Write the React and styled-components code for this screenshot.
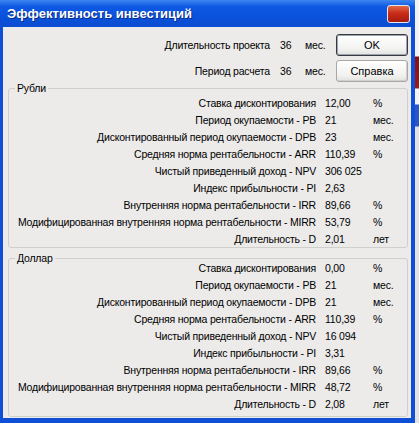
import React from 'react';
import styled, { createGlobalStyle } from 'styled-components';

const GlobalStyle = createGlobalStyle`
  html, body {
    margin: 0;
    padding: 0;
  }
  body {
    font-family: 'Liberation Sans', Arial, sans-serif;
    font-size: 10.5px;
    letter-spacing: -0.2px;
    color: #000;
  }
`;

// desktop behind the dialog, only a thin strip shows on the right
const Desktop = styled.div`
  display: flex;
  width: 419px;
  height: 423px;
  overflow: hidden;
  background: linear-gradient(
    to bottom,
    #f2f2f2 0px,
    #f2f2f2 56px,
    #8a1010 57px,
    #a01818 88px,
    #f4f4f4 89px,
    #f4f4f4 104px,
    #2a56c8 105px,
    #2a56c8 126px,
    #e2e2e2 127px,
    #e2e2e2 100%
  );
`;

const Window = styled.div`
  display: flex;
  flex-direction: column;
  flex-shrink: 0;
  width: 415px;
  height: 423px;
  background: #0f4fd6;
`;

const TitleBar = styled.div`
  display: flex;
  flex-shrink: 0;
  align-items: center;
  justify-content: space-between;
  height: 27px;
  padding: 0 5px 0 7px;
  box-sizing: border-box;
  background: linear-gradient(
    to bottom,
    #3d86f0 0%,
    #0d58e4 25%,
    #0a52dc 60%,
    #0b4cd0 100%
  );
`;

const Title = styled.span`
  color: #fff;
  font-family: 'Liberation Sans', Arial, sans-serif;
  font-weight: bold;
  font-size: 13px;
  letter-spacing: 0;
  text-shadow: 1px 1px 0 #0a2a80;
`;

const CloseBox = styled.div`
  width: 23px;
  height: 18px;
  margin-top: 1px;
  border: 1px solid #e8e8e8;
  border-radius: 3px;
  box-sizing: border-box;
  background: linear-gradient(to bottom, #e06a48 0%, #c82c18 45%, #a81a10 100%);
`;

const Frame = styled.div`
  flex: 1;
  display: flex;
  min-height: 0;
  padding: 0 4px 5px 3px;
  background: #0f4fd6;
`;

const Body = styled.div`
  flex: 1;
  display: flex;
  flex-direction: column;
  min-width: 0;
  padding-top: 7px;
  background: #ecebea;
`;

const Header = styled.div`
  display: grid;
  grid-template-columns: minmax(0, 1fr) 25px 31px 72px;
  grid-auto-rows: 22px;
  row-gap: 4px;
  padding-right: 3px;
  align-items: center;
`;

const HeadLabel = styled.span`
  text-align: right;
  padding-right: 10px;
  white-space: nowrap;
`;

const Button = styled.button`
  height: 22px;
  padding: 0;
  font-family: inherit;
  font-size: 11px;
  letter-spacing: 0;
  color: #000;
  border-radius: 3px;
  border: 1px solid ${(p) => (p.$default ? '#3a3a3a' : '#a8a8a8')};
  box-shadow: ${(p) =>
    p.$default ? 'inset 0 0 0 1px #9aa4b8' : 'inset -1px -1px 0 #d0d0d0'};
  background: linear-gradient(to bottom, #ffffff 0%, #f2f2f0 70%, #e2e2de 100%);
`;

const Group = styled.fieldset`
  margin: ${(p) => p.$gap}px 3px 0 5px;
  padding: 0 0 ${(p) => p.$bottom}px;
  border: 1px solid #cfcfcc;
  border-radius: 3px;
  min-width: 0;
`;

const Legend = styled.legend`
  margin-left: 6px;
  padding: 0 2px;
  line-height: 13px;
`;

const Rows = styled.div`
  display: grid;
  grid-template-columns: minmax(0, 1fr) 48px 34px;
  grid-auto-rows: 17px;
  align-items: center;
  margin-top: ${(p) => p.$offset}px;
`;

const Label = styled.span`
  text-align: right;
  padding-right: 9px;
  white-space: nowrap;
`;

const Value = styled.span`
  white-space: nowrap;
`;

const Unit = styled.span`
  white-space: nowrap;
`;

const rub = [
  ['Ставка дисконтирования', '12,00', '%'],
  ['Период окупаемости - PB', '21', 'мес.'],
  ['Дисконтированный период окупаемости - DPB', '23', 'мес.'],
  ['Средняя норма рентабельности - ARR', '110,39', '%'],
  ['Чистый приведенный доход - NPV', '306 025', ''],
  ['Индекс прибыльности - PI', '2,63', ''],
  ['Внутренняя норма рентабельности - IRR', '89,66', '%'],
  ['Модифицированная внутренняя норма рентабельности - MIRR', '53,79', '%'],
  ['Длительность - D', '2,01', 'лет'],
];

const usd = [
  ['Ставка дисконтирования', '0,00', '%'],
  ['Период окупаемости - PB', '21', 'мес.'],
  ['Дисконтированный период окупаемости - DPB', '21', 'мес.'],
  ['Средняя норма рентабельности - ARR', '110,39', '%'],
  ['Чистый приведенный доход - NPV', '16 094', ''],
  ['Индекс прибыльности - PI', '3,31', ''],
  ['Внутренняя норма рентабельности - IRR', '89,66', '%'],
  ['Модифицированная внутренняя норма рентабельности - MIRR', '48,72', '%'],
  ['Длительность - D', '2,08', 'лет'],
];

const ResultGroup = ({ title, rows, gap, offset, bottom }) => (
  <Group $gap={gap} $bottom={bottom}>
    <Legend>{title}</Legend>
    <Rows $offset={offset}>
      {rows.map(([label, value, unit]) => (
        <React.Fragment key={label}>
          <Label>{label}</Label>
          <Value>{value}</Value>
          <Unit>{unit}</Unit>
        </React.Fragment>
      ))}
    </Rows>
  </Group>
);

export default function App() {
  return (
    <Desktop>
      <GlobalStyle />
      <Window>
        <TitleBar>
          <Title>Эффективность инвестиций</Title>
          <CloseBox />
        </TitleBar>
        <Frame>
          <Body>
            <Header>
              <HeadLabel>Длительность проекта</HeadLabel>
              <Value>36</Value>
              <Unit>мес.</Unit>
              <Button $default>OK</Button>
              <HeadLabel>Период расчета</HeadLabel>
              <Value>36</Value>
              <Unit>мес.</Unit>
              <Button>Справка</Button>
            </Header>
            <ResultGroup title="Рубли" rows={rub} gap={0} offset={-1} bottom={0} />
            <ResultGroup title="Доллар" rows={usd} gap={4} offset={-6} bottom={4} />
          </Body>
        </Frame>
      </Window>
    </Desktop>
  );
}
